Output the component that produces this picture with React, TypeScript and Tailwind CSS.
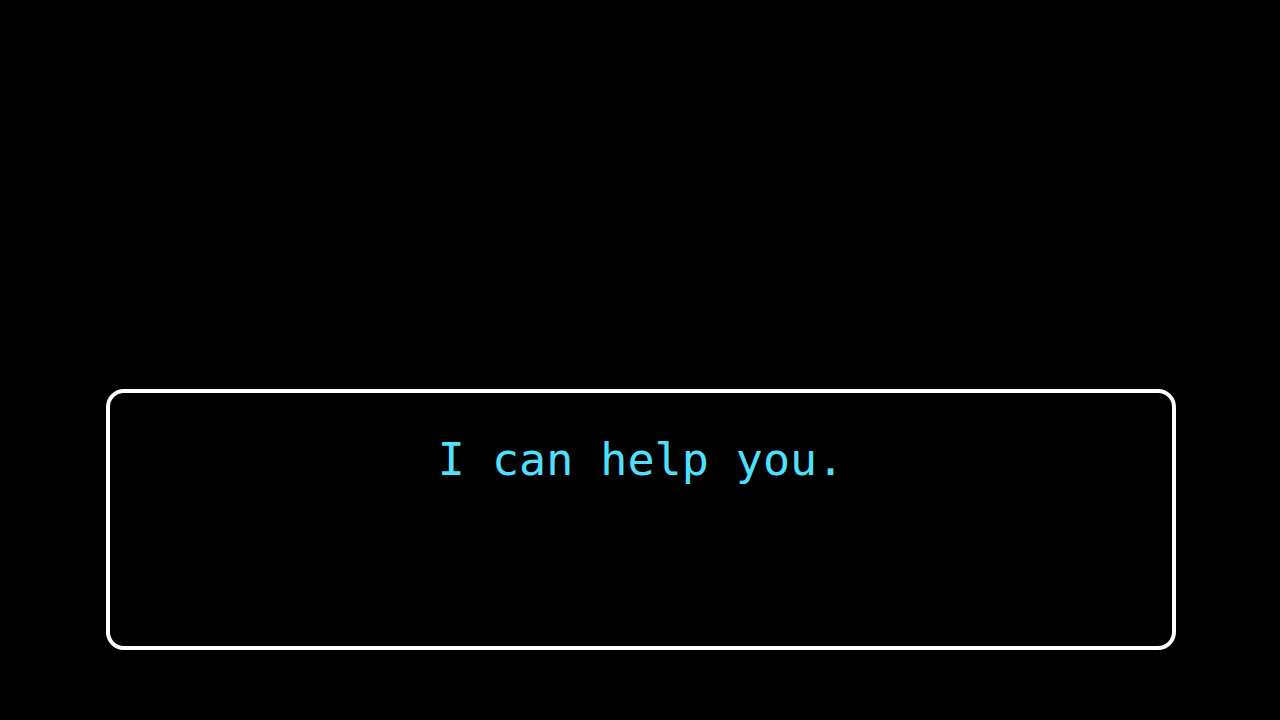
import React from "react";

export default function App() {
  return (
    <div className="w-[1280px] h-[720px] bg-black flex flex-col">
      <div className="h-[389px]" />
      <div className="ml-[106px] w-[1070px] h-[261px] border-4 border-white rounded-[18px] flex justify-center">
        <p
          className="mt-[37px] text-[45px] leading-[60px] text-[#50e0ff] whitespace-pre"
          style={{ fontFamily: '"DejaVu Sans Mono", "Liberation Mono", monospace' }}
        >
          I can help you.
        </p>
      </div>
    </div>
  );
}
